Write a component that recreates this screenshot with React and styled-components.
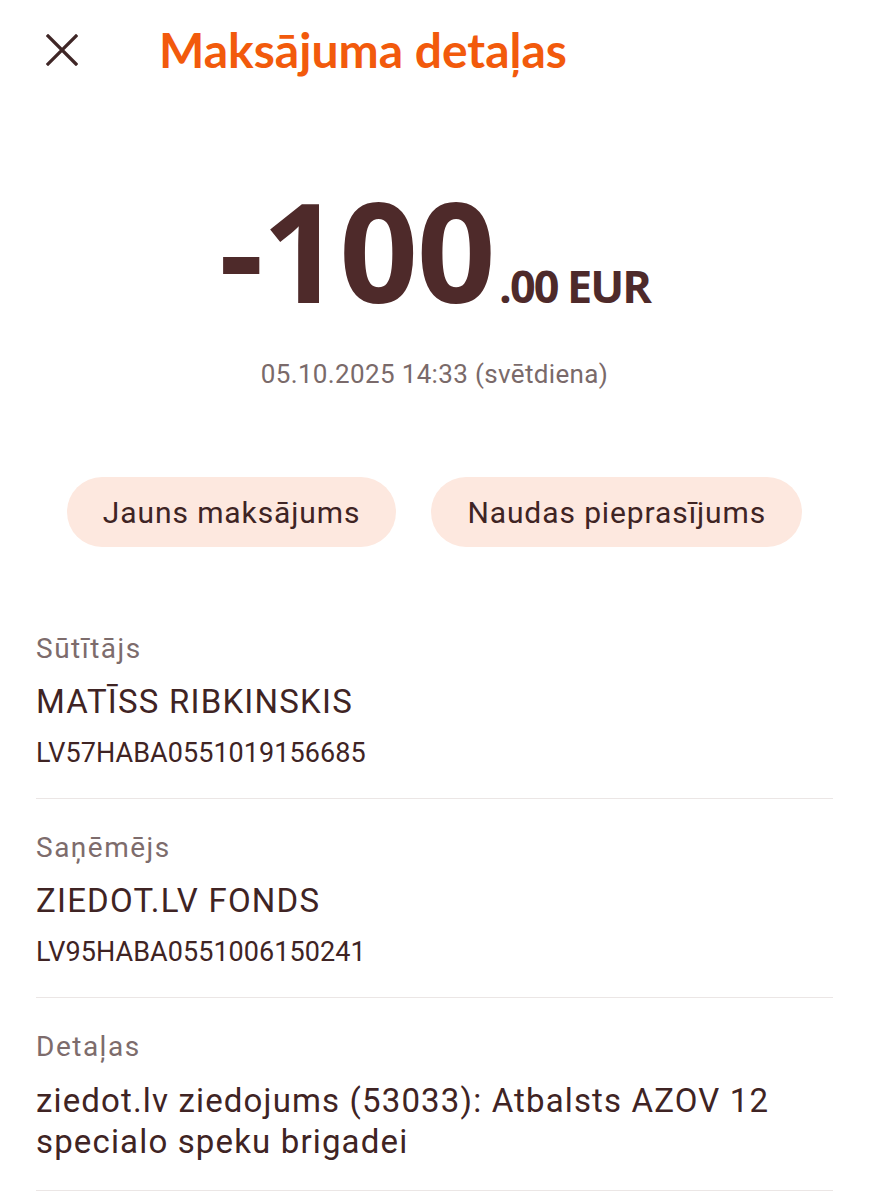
import React from "react";
import styled, { createGlobalStyle } from "styled-components";

const Global = createGlobalStyle`
  html, body { margin: 0; padding: 0; background: #ffffff; }
  body { font-family: Roboto, "Noto Sans", sans-serif; -webkit-font-smoothing: antialiased; }
`;

const Page = styled.div`
  width: 869px;
  min-height: 1200px;
  background: #fff;
  display: flex;
  flex-direction: column;
  overflow: hidden;
`;

const Header = styled.header`
  height: 100px;
  display: flex;
  align-items: center;
  padding-left: 46px;
  gap: 81px;
`;

const CloseButton = styled.button`
  width: 32px;
  height: 32px;
  padding: 0;
  border: none;
  background: none;
  display: flex;
  align-items: center;
  justify-content: center;
  color: #3f2626;
`;

const Title = styled.h1`
  margin: 0;
  font-family: Lato, "Open Sans", sans-serif;
  font-weight: 700;
  font-size: 48px;
  line-height: 1;
  color: #f25a0c;
  letter-spacing: 0;
`;

const AmountRow = styled.div`
  margin-top: 80px;
  display: flex;
  justify-content: center;
  align-items: baseline;
  color: #4e2a2a;
  font-family: "Open Sans", Lato, sans-serif;
  font-weight: 700;
`;

const AmountMain = styled.span`
  font-size: 138px;
  line-height: 1;
  letter-spacing: -1.5px;
`;

const AmountFraction = styled.span`
  font-size: 45px;
  line-height: 1;
  margin-left: 5px;
  letter-spacing: -2px;
`;

const DateText = styled.div`
  margin-top: 40px;
  text-align: center;
  font-size: 26px;
  line-height: 32px;
  letter-spacing: 0.35px;
  color: #7a6a6a;
`;

const Actions = styled.div`
  margin-top: 87px;
  display: flex;
  justify-content: center;
  gap: 35px;
`;

const Pill = styled.button`
  height: 70px;
  padding: 0 36px;
  border: none;
  border-radius: 35px;
  background: #fde8df;
  font-family: Roboto, sans-serif;
  font-size: 30px;
  letter-spacing: 0.9px;
  color: #3f2424;
`;

const List = styled.div`
  margin-top: 84px;
  padding: 0 36px;
  display: flex;
  flex-direction: column;
`;

const Field = styled.section`
  display: flex;
  flex-direction: column;
  padding-bottom: ${(p) => p.$bottom}px;
  border-bottom: 1.5px solid #ebe6e5;
  margin-bottom: 31px;
`;

const Label = styled.div`
  font-size: 28px;
  line-height: 36px;
  letter-spacing: 1.5px;
  color: #7d6c6c;
`;

const Value = styled.div`
  margin-top: 15px;
  font-size: 33px;
  line-height: ${(p) => (p.$multi ? 41 : 40)}px;
  letter-spacing: ${(p) => (p.$multi ? 1.15 : 1.2)}px;
  color: #3f2424;
`;

const Iban = styled.div`
  margin-top: 14px;
  font-size: 27px;
  line-height: 34px;
  letter-spacing: 0.05px;
  color: #3f2424;
`;

const CloseIcon = () => (
  <svg width="32" height="32" viewBox="0 0 32 32" fill="none">
    <path d="M2 2 L30 30 M30 2 L2 30" stroke="currentColor" strokeWidth="3.2" strokeLinecap="square" />
  </svg>
);

export default function App() {
  return (
    <Page>
      <Global />
      <Header>
        <CloseButton aria-label="Aizvērt">
          <CloseIcon />
        </CloseButton>
        <Title>Maksājuma detaļas</Title>
      </Header>

      <AmountRow>
        <AmountMain>-100</AmountMain>
        <AmountFraction>.00 EUR</AmountFraction>
      </AmountRow>
      <DateText>05.10.2025 14:33 (svētdiena)</DateText>

      <Actions>
        <Pill>Jauns maksājums</Pill>
        <Pill>Naudas pieprasījums</Pill>
      </Actions>

      <List>
        <Field $bottom={28}>
          <Label>Sūtītājs</Label>
          <Value>MATĪSS RIBKINSKIS</Value>
          <Iban>LV57HABA0551019156685</Iban>
        </Field>
        <Field $bottom={28}>
          <Label>Saņēmējs</Label>
          <Value>ZIEDOT.LV FONDS</Value>
          <Iban>LV95HABA0551006150241</Iban>
        </Field>
        <Field $bottom={28}>
          <Label>Detaļas</Label>
          <Value $multi>ziedot.lv ziedojums (53033): Atbalsts AZOV 12 specialo speku brigadei</Value>
        </Field>
      </List>
    </Page>
  );
}
